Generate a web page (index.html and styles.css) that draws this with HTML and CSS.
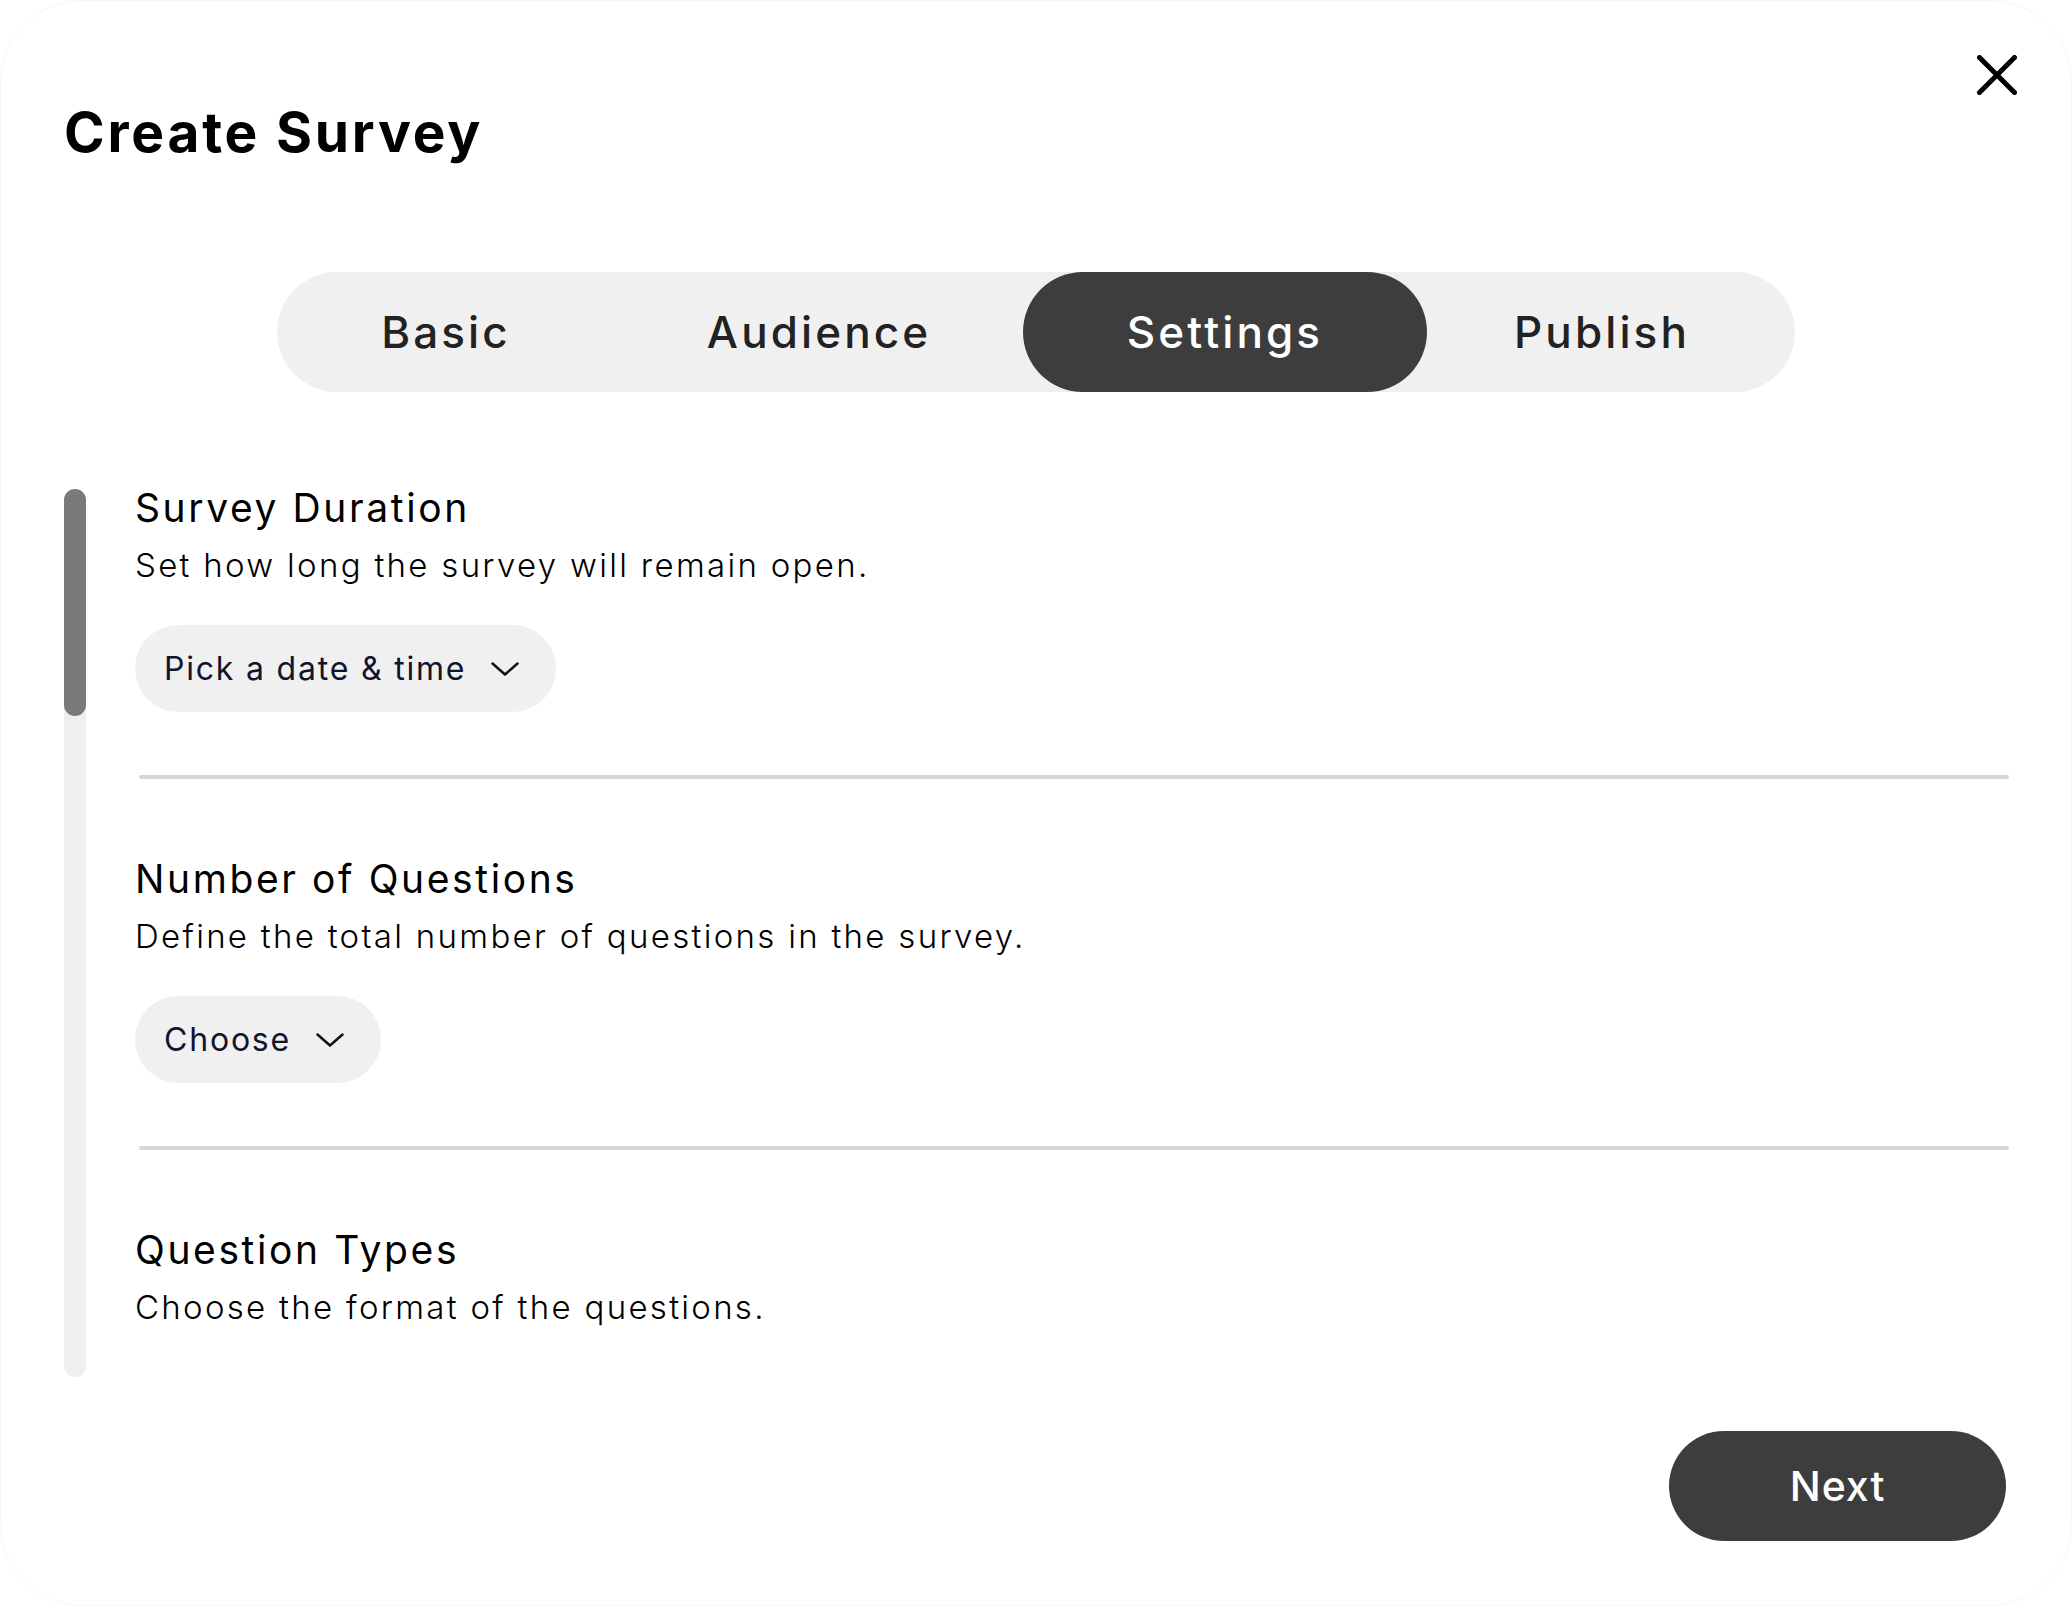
FILE: index.html
```html
<!DOCTYPE html>
<html lang="en">
<head>
<meta charset="utf-8">
<title>Create Survey</title>
<link rel="stylesheet" href="styles.css">
</head>
<body>
<div class="modal">
  <header class="modal-header">
    <h1 class="modal-title">Create Survey</h1>
    <button class="close-btn" aria-label="Close">
      <svg width="40" height="40" viewBox="0 0 40 40"><path d="M2.5 2.5 L37.5 37.5 M37.5 2.5 L2.5 37.5" stroke="#000" stroke-width="5" stroke-linecap="round" fill="none"/></svg>
    </button>
  </header>

  <nav class="tabs">
    <div class="tab">Basic</div>
    <div class="tab">Audience</div>
    <div class="tab tab-active">Settings</div>
    <div class="tab tab-last">Publish</div>
  </nav>

  <div class="body-row">
    <div class="scroll-track"><div class="scroll-thumb"></div></div>
    <div class="content">
      <section class="setting">
        <h2 class="setting-title">Survey Duration</h2>
        <p class="setting-desc">Set how long the survey will remain open.</p>
        <button class="select-pill">
          <span class="select-label">Pick a date &amp; time</span>
          <svg class="chevron" width="28" height="14" viewBox="0 0 28 14"><polyline points="1.5,1.5 14,12.5 26.5,1.5" fill="none" stroke="#111" stroke-width="2.5" stroke-linecap="round" stroke-linejoin="round"/></svg>
        </button>
      </section>
      <div class="divider"></div>
      <section class="setting">
        <h2 class="setting-title">Number of Questions</h2>
        <p class="setting-desc">Define the total number of questions in the survey.</p>
        <button class="select-pill">
          <span class="select-label">Choose</span>
          <svg class="chevron" width="28" height="14" viewBox="0 0 28 14"><polyline points="1.5,1.5 14,12.5 26.5,1.5" fill="none" stroke="#111" stroke-width="2.5" stroke-linecap="round" stroke-linejoin="round"/></svg>
        </button>
      </section>
      <div class="divider"></div>
      <section class="setting">
        <h2 class="setting-title">Question Types</h2>
        <p class="setting-desc">Choose the format of the questions.</p>
      </section>
    </div>
  </div>

  <footer class="modal-footer">
    <button class="next-btn">Next</button>
  </footer>
</div>
</body>
</html>
```

FILE: styles.css
```css
html, body {
  margin: 0;
  padding: 0;
  background: #ffffff;
}

body {
  font-family: "Inter", "Open Sans", sans-serif;
  color: #000;
  overflow: hidden;
}

.modal {
  width: 2072px;
  height: 1606px;
  box-sizing: border-box;
  border: 1px solid #f7f7f7;
  border-radius: 82px;
  background: #fff;
  display: flex;
  flex-direction: column;
  overflow: hidden;
}

.modal-header {
  display: flex;
  justify-content: space-between;
  align-items: flex-start;
  padding: 54px 54px 0 63px;
}

.modal-title {
  margin: 50px 0 0 0;
  font-size: 55px;
  line-height: 55px;
  font-weight: 700;
  letter-spacing: 2.8px;
  color: #000;
}

.close-btn {
  width: 40px;
  height: 40px;
  padding: 0;
  border: 0;
  background: none;
  display: block;
}

.close-btn svg {
  display: block;
}

.tabs {
  align-self: center;
  margin-top: 112px;
  width: 1518px;
  height: 120px;
  background: #f0f0f0;
  border-radius: 60px;
  display: grid;
  grid-template-columns: 338px 408px 404px 368px;
}

.tab {
  display: flex;
  align-items: center;
  justify-content: center;
  font-size: 44px;
  font-weight: 500;
  letter-spacing: 3.1px;
  color: #222;
  border-radius: 60px;
}

.tab-last {
  padding-right: 18px;
}

.tab-active {
  background: #3d3d3d;
  color: #fff;
}

.body-row {
  display: flex;
  margin-top: 97px;
  padding-left: 63px;
  height: 888px;
  gap: 49px;
}

.scroll-track {
  width: 22px;
  height: 888px;
  background: #efefef;
  border-radius: 11px;
  flex: none;
}

.scroll-thumb {
  width: 22px;
  height: 227px;
  background: #7a7a7a;
  border-radius: 11px;
}

.content {
  width: 1874px;
  margin-top: -5px;
}

.setting-title {
  margin: 0;
  font-size: 39px;
  line-height: 48px;
  font-weight: 400;
  letter-spacing: 2.6px;
  color: #000;
}

.setting-desc {
  margin: 14px 0 0 0;
  font-size: 33px;
  line-height: 38px;
  font-weight: 300;
  letter-spacing: 2.3px;
  color: #000;
}

.select-pill {
  margin-top: 41px;
  height: 87px;
  padding: 0 37px 0 29px;
  border: 0;
  border-radius: 44px;
  background: #f0f0f0;
  display: inline-flex;
  align-items: center;
  gap: 25px;
  font-family: inherit;
}

.select-label {
  font-size: 32px;
  font-weight: 400;
  letter-spacing: 1.8px;
  color: #12142e;
}

.chevron {
  display: block;
}

.divider {
  margin: 63px 0 76px 4px;
  height: 4px;
  background: #d6d6d6;
  border-radius: 2px;
}

.modal-footer {
  display: flex;
  justify-content: flex-end;
  padding-right: 65px;
  margin-top: 54px;
}

.next-btn {
  width: 337px;
  height: 110px;
  border: 0;
  border-radius: 55px;
  background: #3d3d3d;
  color: #fff;
  font-family: inherit;
  font-size: 41px;
  font-weight: 500;
  letter-spacing: 1px;
}
```
